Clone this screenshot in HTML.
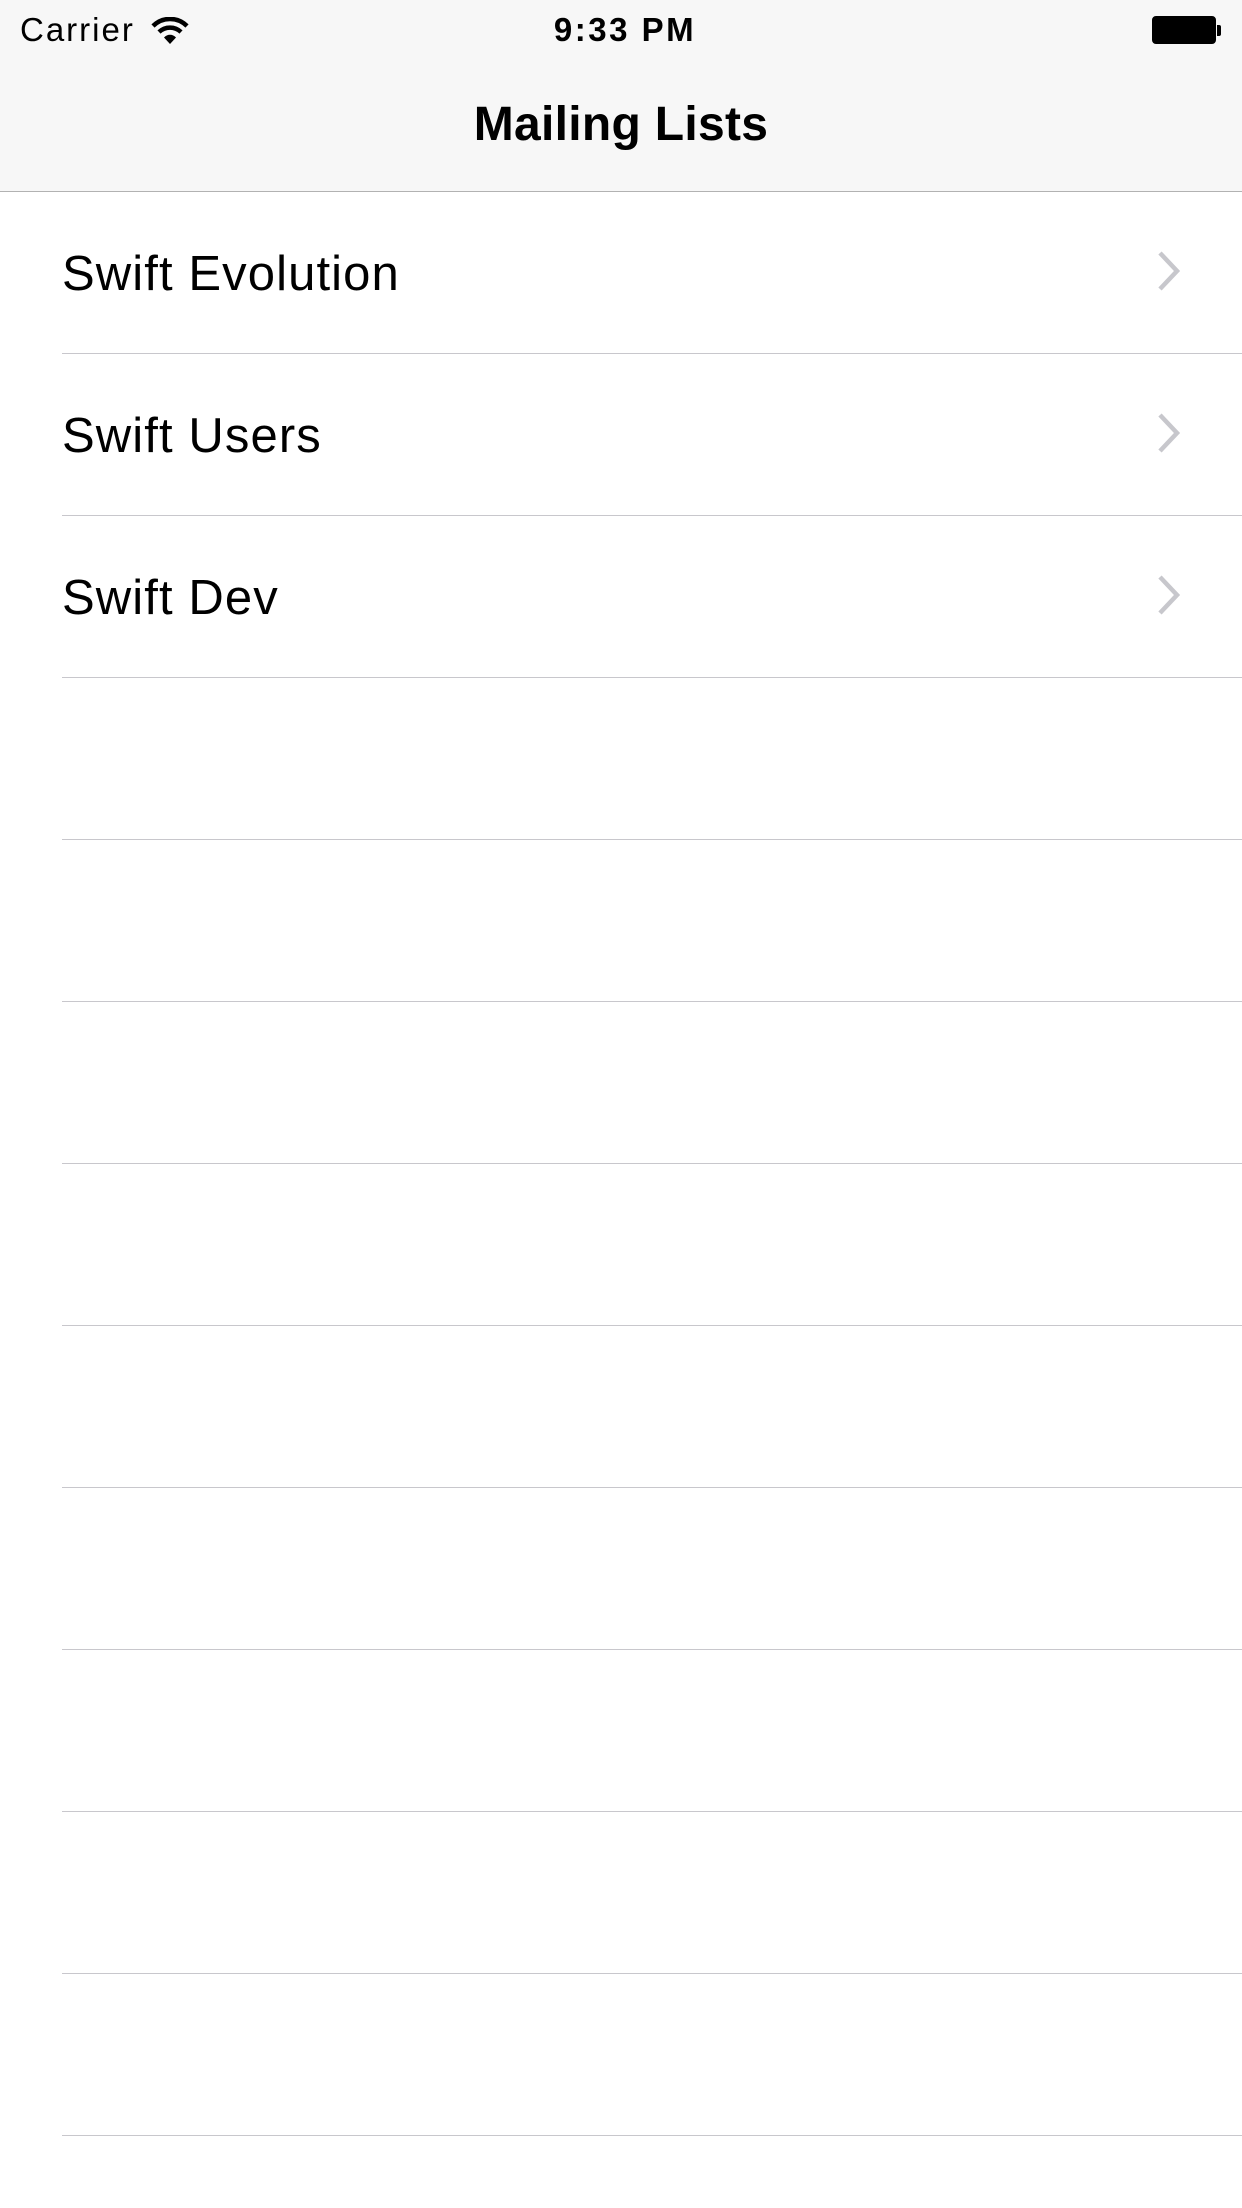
<!DOCTYPE html>
<html><head><meta charset="utf-8"><style>
html,body{margin:0;padding:0;width:1242px;height:2208px;background:#fff;overflow:hidden;font-family:"Liberation Sans",sans-serif;color:#000}
.nav{position:absolute;left:0;top:0;width:1242px;height:191px;background:#f7f7f7;border-bottom:1px solid #b2b2b2}
.st{position:absolute;top:10px;font-size:33px;line-height:40px}
.title{position:absolute;top:95px;left:0;width:1242px;text-align:center;font-size:48px;font-weight:bold;line-height:60px;letter-spacing:0.3px}
.row{position:absolute;left:62px;width:1180px;height:161px;border-bottom:1px solid #c8c7cc}
.row span{position:absolute;left:0;top:54px;font-size:49px;line-height:56px;letter-spacing:1.1px}
.row svg{position:absolute;left:1094px;top:58px}
</style></head><body>
<div class="nav">
<div class="st" style="left:20px;letter-spacing:2px">Carrier</div>
<svg style="position:absolute;left:150px;top:17px" width="40" height="28" viewBox="0 0 40 28">
<path d="M3 9 A24 24 0 0 1 37 9" stroke="#000" stroke-width="4.5" fill="none"/>
<path d="M9 15 A16 16 0 0 1 31 15" stroke="#000" stroke-width="4.5" fill="none"/>
<path d="M14 20.5 A8 8 0 0 1 26 20.5 L20 27 Z" fill="#000"/>
</svg>
<div class="st" style="left:540px;width:170px;text-align:center;font-weight:bold;letter-spacing:2.5px">9:33 PM</div>
<div style="position:absolute;left:1152px;top:16px;width:64px;height:28px;border:1.5px solid #000;border-radius:4px;background:#000;box-sizing:border-box"></div>
<div style="position:absolute;left:1217px;top:25px;width:4px;height:11px;background:#000;border-radius:0 2px 2px 0"></div>
<div class="title">Mailing Lists</div>
</div>
<div class="row" style="top:192px"><span>Swift Evolution</span><svg width="28" height="42" viewBox="0 0 28 42"><path d="M4 3 L21 21 L4 39" stroke="#c7c7cc" stroke-width="4.5" fill="none"/></svg></div>
<div class="row" style="top:354px"><span>Swift Users</span><svg width="28" height="42" viewBox="0 0 28 42"><path d="M4 3 L21 21 L4 39" stroke="#c7c7cc" stroke-width="4.5" fill="none"/></svg></div>
<div class="row" style="top:516px"><span>Swift Dev</span><svg width="28" height="42" viewBox="0 0 28 42"><path d="M4 3 L21 21 L4 39" stroke="#c7c7cc" stroke-width="4.5" fill="none"/></svg></div>
<div class="row" style="top:678px"></div>
<div class="row" style="top:840px"></div>
<div class="row" style="top:1002px"></div>
<div class="row" style="top:1164px"></div>
<div class="row" style="top:1326px"></div>
<div class="row" style="top:1488px"></div>
<div class="row" style="top:1650px"></div>
<div class="row" style="top:1812px"></div>
<div class="row" style="top:1974px"></div>
</body></html>
